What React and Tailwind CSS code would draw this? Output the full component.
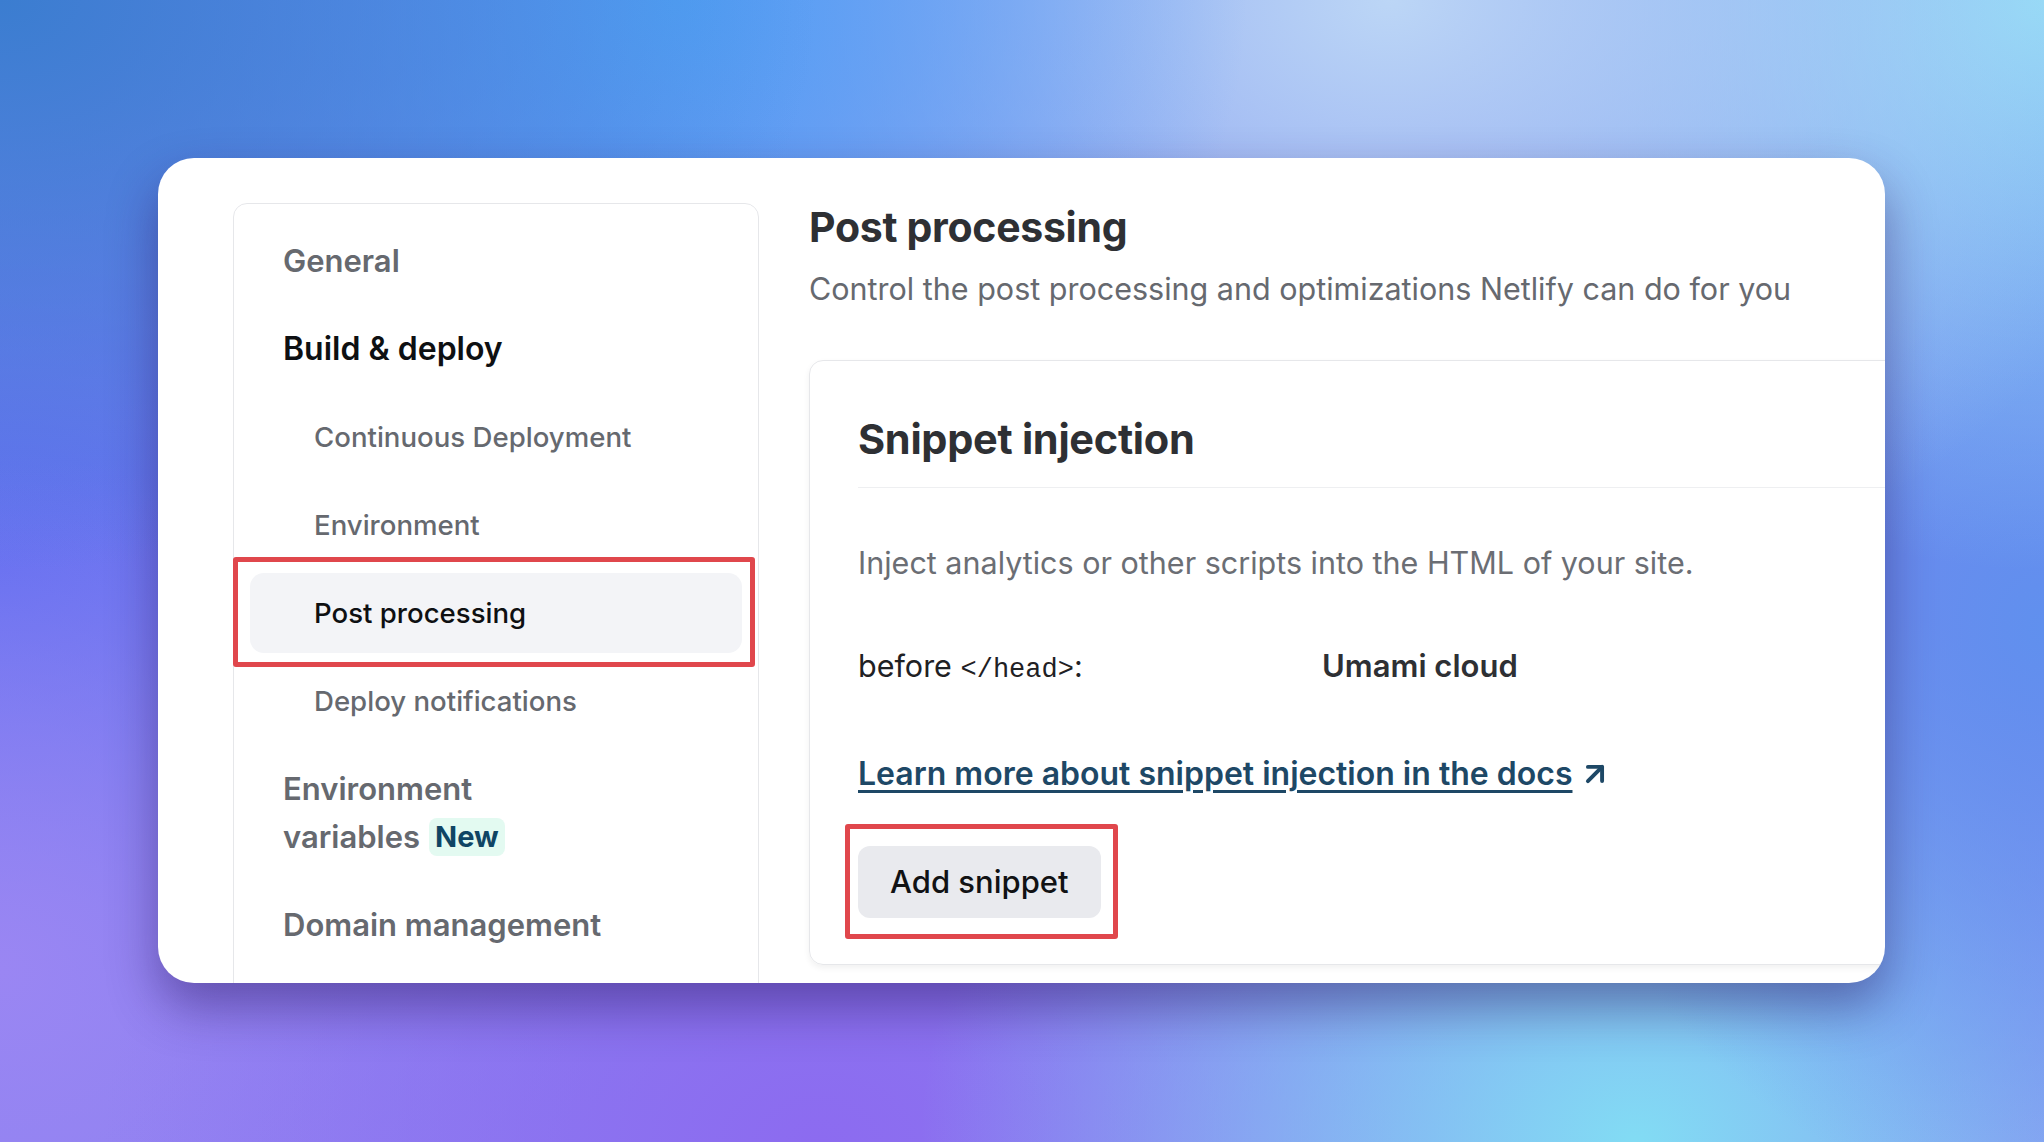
import React from 'react';
import { ArrowUpRight } from 'lucide-react';

const navItems = [
  { label: 'General', level: 0 },
  { label: 'Build & deploy', level: 0, strong: true },
  { label: 'Continuous Deployment', level: 1 },
  { label: 'Environment', level: 1 },
  { label: 'Post processing', level: 1, active: true },
  { label: 'Deploy notifications', level: 1 },
  { label: 'Environment variables', level: 0, badge: 'New' },
  { label: 'Domain management', level: 0 },
];

const NavItem = ({ item }) => {
  const base = item.level === 0
    ? `pl-[33px] font-semibold ${item.strong ? 'text-[32px]' : 'text-[31px]'}`
    : 'pl-[64px] text-[27.6px] font-medium';
  const color = item.strong || item.active ? 'text-[#0e1012]' : 'text-[#66696f]';
  return (
    <div className={`relative py-[16px] pr-4 leading-[48px] rounded-[14px] ${base} ${color} ${item.active ? 'bg-[#f3f4f7]' : ''} ${item.strong ? 'font-bold' : ''}`}>
      {item.badge ? (
        <>
          <div>Environment</div>
          <div className="flex items-center gap-[9px]">
            <span>variables</span>
            <span className="rounded-[8px] bg-[#e3faf1] px-[6px] leading-[38px] text-[29px] font-bold text-[#0f4564]">{item.badge}</span>
          </div>
        </>
      ) : (
        item.label
      )}
      {item.active && (
        <div className="absolute -left-[17px] -right-[13px] -top-[16px] -bottom-[14px] border-[5px] border-[#e0474c] rounded-[3px]" />
      )}
    </div>
  );
};

const App = () => {
  return (
    <div
      className="w-full h-[1142px] pt-[158px] pl-[158px] bg-[radial-gradient(40%_50%_at_0%_0%,#3b7dd0,transparent),radial-gradient(28%_45%_at_33%_0%,#52a0f5,transparent),radial-gradient(40%_55%_at_68%_0%,#bcd6f6,transparent),radial-gradient(30%_50%_at_100%_0%,#8fdaf6,transparent),radial-gradient(25%_50%_at_100%_55%,#6090ee,transparent),radial-gradient(35%_50%_at_80%_100%,#82dcf4,transparent),radial-gradient(35%_45%_at_40%_100%,#8c6bf0,transparent),radial-gradient(30%_45%_at_0%_85%,#9a86f3,transparent),radial-gradient(30%_40%_at_0%_50%,#5f6ef0,transparent),linear-gradient(#6d86ee,#8a80f0)]"
      style={{ fontFamily: 'Inter, "Noto Sans", sans-serif' }}
    >
      <div className="w-[1727px] h-[825px] bg-white rounded-[36px] overflow-hidden shadow-[0_24px_50px_rgba(40,20,90,0.45)] flex pl-[75px] pt-[45px] gap-[50px]">
        {/* sidebar */}
        <div className="w-[526px] shrink-0 h-[900px] border border-[#e6e7ea] rounded-[14px] px-[16px] pt-[17px] flex flex-col gap-[8px]">
          {navItems.map((item) => (
            <NavItem key={item.label} item={item} />
          ))}
        </div>

        {/* main */}
        <div className="flex-1 min-w-0">
          <h1 className="text-[41px] leading-[48px] font-bold text-[#2e3034] tracking-[-0.3px]">Post processing</h1>
          <p className="mt-[18px] text-[30.5px] leading-[40px] text-[#66696f]">
            Control the post processing and optimizations Netlify can do for you
          </p>

          <div className="mt-[51px] w-[1300px] border border-[#e6e7ea] rounded-[14px] shadow-[0_3px_6px_rgba(0,0,0,0.06)] pl-[48px] pt-[54px] pb-[46px]">
            <h2 className="text-[41.5px] leading-[48px] font-bold text-[#2e3034] pb-[24px] border-b border-[#eeeff1] tracking-[-0.3px]">
              Snippet injection
            </h2>
            <p className="mt-[55px] text-[30.5px] leading-[40px] text-[#6b6e74]">
              Inject analytics or other scripts into the HTML of your site.
            </p>
            <div className="mt-[63px] flex text-[30.5px] leading-[40px]">
              <div className="w-[464px] text-[#1f2124]">
                before <code className="text-[27px]" style={{ fontFamily: '"Liberation Mono", monospace' }}>&lt;/head&gt;</code>:
              </div>
              <div className="text-[31px] font-semibold text-[#2e3034]">Umami cloud</div>
            </div>
            <div className="mt-[62px] flex items-center gap-[6px] text-[32px] leading-[44px] font-semibold text-[#1e4866]">
              <a href="#" className="underline decoration-[3px] underline-offset-[5px]">
                Learn more about snippet injection in the docs
              </a>
              <ArrowUpRight size={34} strokeWidth={2.75} />
            </div>
            <div className="mt-[50px] relative inline-block">
              <button className="h-[72px] px-[32px] rounded-[12px] bg-[#e9eaee] text-[31px] font-medium text-[#111214]">
                Add snippet
              </button>
              <div className="absolute -left-[13px] -right-[17px] -top-[22px] -bottom-[21px] border-[5px] border-[#e0474c] rounded-[3px]" />
            </div>
          </div>
        </div>
      </div>
    </div>
  );
};

export default App;
